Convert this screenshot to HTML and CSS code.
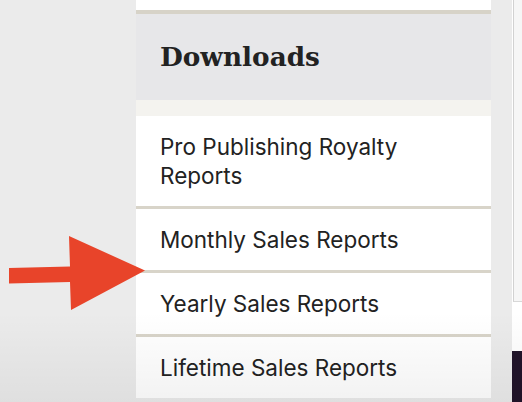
FILE: index.html
```html
<!DOCTYPE html>
<html>
<head>
<meta charset="utf-8">
<link rel="stylesheet" href="styles.css">
</head>
<body>
<div class="page">
  <div class="spacer"></div>
  <div class="panel">
    <div class="panel-top"></div>
    <div class="panel-head"><h2 class="title">Downloads</h2></div>
    <div class="panel-gap"></div>
    <ul class="list">
      <li class="item">Pro Publishing Royalty Reports</li>
      <li class="item">Monthly Sales Reports</li>
      <li class="item">Yearly Sales Reports</li>
      <li class="item">Lifetime Sales Reports</li>
    </ul>
  </div>
  <div class="side">
    <div class="side-box"></div>
    <div class="side-white"></div>
    <div class="side-dark"></div>
  </div>
</div>
<svg class="arrow" width="150" height="80" viewBox="0 230 150 80">
  <polygon points="9,268 70,266.5 69,236 145,270.5 71,310 70,282 9,283.5" fill="#e8442a"/>
</svg>
<div class="fade"></div>
</body>
</html>
```
FILE: styles.css
```css
html, body {
  margin: 0;
  padding: 0;
  height: 100%;
  overflow: hidden;
}
body {
  background: #ebebeb;
  font-family: Inter, "Noto Sans", sans-serif;
  color: #222;
  position: relative;
}
.page {
  display: flex;
  align-items: flex-start;
}
.spacer {
  width: 136px;
  flex: none;
}
.panel {
  width: 355px;
  flex: none;
}
.panel-top {
  height: 10px;
  background: #fff;
  border-bottom: 4px solid #d7d3c8;
}
.panel-head {
  background: #e7e7e9;
  height: 86px;
  box-sizing: border-box;
  padding: 28px 24px 0;
}
.title {
  margin: 0;
  font-family: "DejaVu Serif", serif;
  font-weight: bold;
  font-size: 26.3px;
  line-height: 30px;
  color: #222;
}
.panel-gap {
  height: 16px;
  background: #f4f3ef;
}
.list {
  list-style: none;
  margin: 0;
  padding: 0;
}
.item {
  background: #fff;
  padding: 16px 50px 16px 24px;
  font-size: 22.5px;
  line-height: 29px;
  border-bottom: 3px solid #d8d4c9;
}
.item:last-child {
  border-bottom: none;
}
.side {
  margin-left: 21px;
  flex: 1;
  background: #fff;
  height: 402px;
  display: flex;
  flex-direction: column;
}
.side-box {
  height: 302px;
  margin-left: 1px;
  box-sizing: border-box;
  background: #f6f6f6;
  border-left: 1px solid #d2d2d2;
  border-bottom: 1px solid #d8d8d8;
}
.side-white {
  height: 49px;
}
.side-dark {
  flex: 1;
  background: #21142a;
}
.arrow {
  position: absolute;
  left: 0;
  top: 230px;
}
.fade {
  position: absolute;
  left: 0;
  right: 0;
  bottom: 0;
  height: 90px;
  background: linear-gradient(rgba(0,0,0,0), rgba(0,0,0,0.05));
  pointer-events: none;
}
```
